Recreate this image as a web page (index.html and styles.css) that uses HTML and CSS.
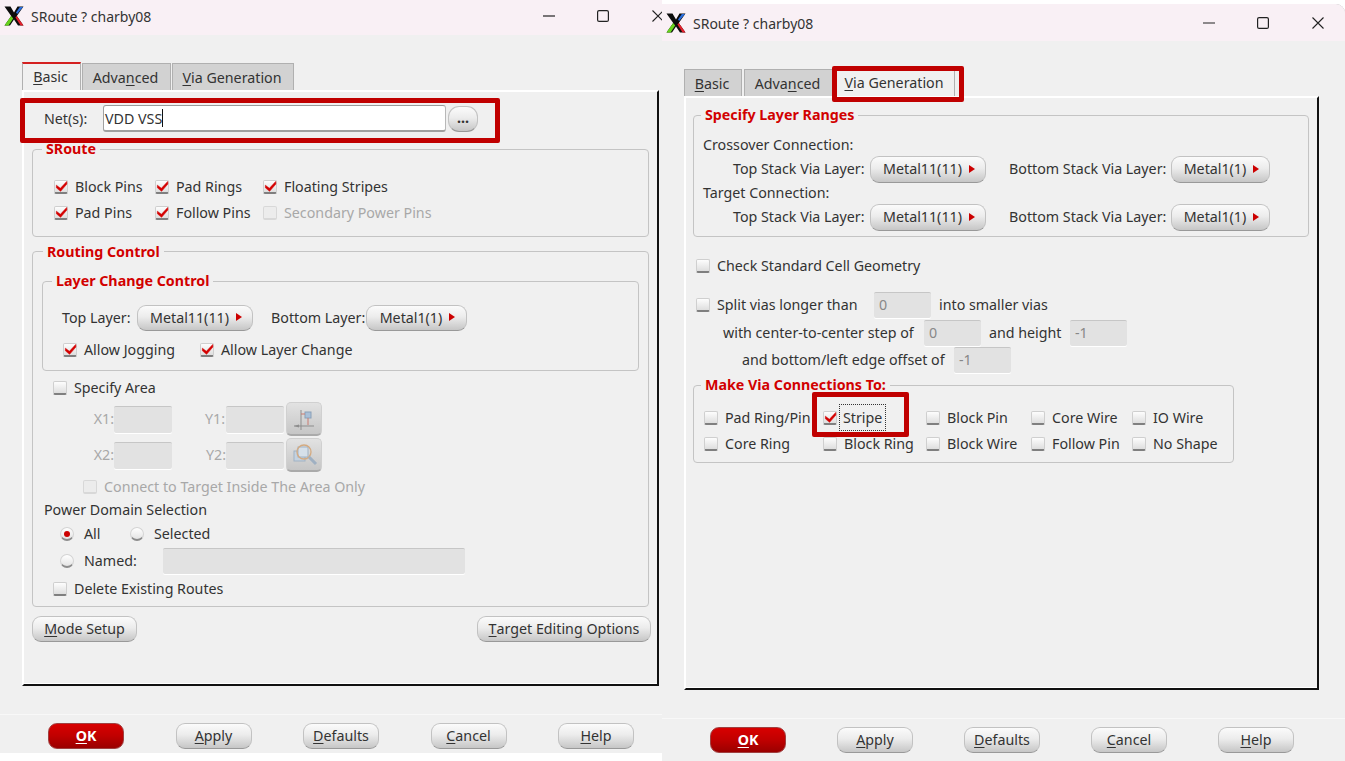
FILE: index.html
```html
<!DOCTYPE html>
<html lang="en">
<head>
<meta charset="utf-8">
<title>SRoute</title>
<link rel="stylesheet" href="styles.css">
</head>
<body>
<svg class="defs" width="0" height="0" aria-hidden="true">
  <symbol id="tick" viewBox="0 0 14 14"><path d="M1.5 5.6 L5.8 9 L12.6 1.6 L12.8 4.4 L6 12.2 L1.5 8.4 Z" fill="#d40000" stroke="#d40000" stroke-width="0.6"/></symbol>
  <symbol id="xlogo" viewBox="0 0 20 20">
    <path d="M0.5 0.5 H6.5 L10 6.5 L13.5 0.5 L19.5 0.5 L12.8 10 L19.5 19.5 H14 L10 13.5 L6 19.5 H0.5 L7.2 10 Z" fill="#0c0c0c"/>
    <path d="M0.5 19.5 L7.2 10 L9.2 12.4 L4.6 19.5 Z" fill="#66d31c"/>
    <path d="M19.5 19.5 L12.8 10 L11.4 11.6 L16.6 19.5 Z" fill="#e4202c"/>
    <path d="M19 1 L15.8 1 L12 6.6 L13.2 8 Z" fill="#2a6fe0"/>
  </symbol>
  <symbol id="min" viewBox="0 0 12 12"><path d="M0 6 H12" stroke="#222" stroke-width="1.2"/></symbol>
  <symbol id="max" viewBox="0 0 12 12"><rect x="0.6" y="0.6" width="10.8" height="10.8" rx="1.5" fill="none" stroke="#222" stroke-width="1.2"/></symbol>
  <symbol id="close" viewBox="0 0 12 12"><path d="M0.5 0.5 L11.5 11.5 M11.5 0.5 L0.5 11.5" stroke="#222" stroke-width="1.1"/></symbol>
</svg>

<section class="window win-left">
  <header class="titlebar title-left">
    <svg class="logo"><use href="#xlogo"/></svg>
    <span class="title-text">SRoute ? charby08</span>
    <div class="controls">
      <span class="ctl"><svg class="ctl-icon"><use href="#min"/></svg></span>
      <span class="ctl"><svg class="ctl-icon"><use href="#max"/></svg></span>
      <span class="ctl"><svg class="ctl-icon"><use href="#close"/></svg></span>
    </div>
  </header>
  <nav class="tabs">
    <span class="tab tab-active w-basic-l"><u>B</u>asic</span>
    <span class="tab w-adv-l">Adva<u>n</u>ced</span>
    <span class="tab w-via-l"><u>V</u>ia Generation</span>
  </nav>
  <main class="pane pane-left">
    <div class="row net-row">
      <span class="net-label">Net(s):</span>
      <span class="input net-input">VDD VSS<i class="caret"></i></span>
      <span class="btn dots">...</span>
    </div>
    <div class="group g-sroute">
      <span class="legend lg-sroute">SRoute</span>
      <div class="cb-grid sroute-grid">
        <label class="cb-item"><span class="cb"><svg class="tick"><use href="#tick"/></svg></span>Block Pins</label>
        <label class="cb-item"><span class="cb"><svg class="tick"><use href="#tick"/></svg></span>Pad Rings</label>
        <label class="cb-item"><span class="cb"><svg class="tick"><use href="#tick"/></svg></span>Floating Stripes</label>
        <label class="cb-item"><span class="cb"><svg class="tick"><use href="#tick"/></svg></span>Pad Pins</label>
        <label class="cb-item"><span class="cb"><svg class="tick"><use href="#tick"/></svg></span>Follow Pins</label>
        <label class="cb-item off"><span class="cb"></span>Secondary Power Pins</label>
      </div>
    </div>
    <div class="group g-routing">
      <span class="legend lg-routing">Routing Control</span>
      <div class="group g-layer">
        <span class="legend lg-layer">Layer Change Control</span>
        <div class="row layer-row">
          <span class="lbl-top text-up">Top Layer:</span>
          <span class="btn menu w-m11">Metal11(11)<i class="arrow"></i></span>
          <span class="lbl-bottom text-up">Bottom Layer:</span>
          <span class="btn menu w-m1-l">Metal1(1)<i class="arrow"></i></span>
        </div>
        <div class="row allow-row">
          <label class="cb-item allow-a"><span class="cb"><svg class="tick"><use href="#tick"/></svg></span>Allow Jogging</label>
          <label class="cb-item"><span class="cb"><svg class="tick"><use href="#tick"/></svg></span>Allow Layer Change</label>
        </div>
      </div>
      <div class="row specify-row">
        <label class="cb-item"><span class="cb"></span>Specify Area</label>
      </div>
      <div class="row coord-row">
        <span class="coord-l text-up">X1:</span><span class="input coord-in off-input"></span>
        <span class="coord-l coord-y coord-y1 text-up">Y1:</span><span class="input coord-in off-input"></span>
        <span class="icon-btn">
          <svg class="tool" viewBox="0 0 28 28"><path d="M4 21 H24 M11 5 V25" stroke="#8d8d8d" fill="none"/><path d="M4 21 L9 19.5 V22.5 Z" fill="#8d8d8d"/><rect x="15" y="7" width="6" height="6" fill="#a9c0d8" stroke="#8aa0b8"/><path d="M11 9 H15 M18 13 V20" stroke="#c87a70"/></svg>
        </span>
      </div>
      <div class="row coord-row coord-2">
        <span class="coord-l text-up">X2:</span><span class="input coord-in off-input"></span>
        <span class="coord-l coord-y text-up">Y2:</span><span class="input coord-in off-input"></span>
        <span class="icon-btn">
          <svg class="tool" viewBox="0 0 28 28"><rect x="4" y="10" width="11" height="10" fill="#c4d2e0" stroke="#a0b2c4"/><rect x="8" y="6" width="10" height="10" fill="#d6e0ea" stroke="#a0b2c4"/><circle cx="14" cy="11" r="7" fill="none" stroke="#d4aa80" stroke-width="1.3"/><path d="M19 16 L26 23" stroke="#9fb0c2" stroke-width="3"/></svg>
        </span>
      </div>
      <div class="row connect-row">
        <label class="cb-item off"><span class="cb"></span>Connect to Target Inside The Area Only</label>
      </div>
      <div class="row domain-row text-up">Power Domain Selection</div>
      <div class="row radio-row">
        <label class="rb-item rb-all"><span class="rb rb-on"></span>All</label>
        <label class="rb-item"><span class="rb"></span>Selected</label>
      </div>
      <div class="row radio-row">
        <label class="rb-item rb-named"><span class="rb"></span>Named:</label>
        <span class="input off-input named-in"></span>
      </div>
      <div class="row delete-row">
        <label class="cb-item"><span class="cb"></span>Delete Existing Routes</label>
      </div>
    </div>
    <div class="row mode-row">
      <span class="btn w-mode"><u>M</u>ode Setup</span>
      <span class="btn w-target"><u>T</u>arget Editing Options</span>
    </div>
  </main>
  <footer class="footer foot-left">
    <span class="btn btn-ok"><u>O</u>K</span>
    <span class="btn"><u>A</u>pply</span>
    <span class="btn"><u>D</u>efaults</span>
    <span class="btn"><u>C</u>ancel</span>
    <span class="btn"><u>H</u>elp</span>
  </footer>
  <div class="mark mark-net"></div>
</section>

<section class="window win-right">
  <header class="titlebar title-right">
    <svg class="logo"><use href="#xlogo"/></svg>
    <span class="title-text">SRoute ? charby08</span>
    <div class="controls">
      <span class="ctl"><svg class="ctl-icon"><use href="#min"/></svg></span>
      <span class="ctl"><svg class="ctl-icon"><use href="#max"/></svg></span>
      <span class="ctl"><svg class="ctl-icon"><use href="#close"/></svg></span>
    </div>
  </header>
  <nav class="tabs">
    <span class="tab w-basic-r"><u>B</u>asic</span>
    <span class="tab w-adv-r">Adva<u>n</u>ced</span>
    <span class="tab tab-plain w-via-r"><u>V</u>ia Generation</span>
  </nav>
  <main class="pane pane-right">
    <div class="group g-ranges">
      <span class="legend lg-ranges">Specify Layer Ranges</span>
      <div class="row conn-title text-up">Crossover Connection:</div>
      <div class="row stack-row">
        <span class="stack-top text-up">Top Stack Via Layer:</span>
        <span class="btn menu w-m11">Metal11(11)<i class="arrow"></i></span>
        <span class="stack-bottom text-up">Bottom Stack Via Layer:</span>
        <span class="btn menu w-m1-r">Metal1(1)<i class="arrow"></i></span>
      </div>
      <div class="row conn-title text-up">Target Connection:</div>
      <div class="row stack-row stack-2">
        <span class="stack-top text-up">Top Stack Via Layer:</span>
        <span class="btn menu w-m11">Metal11(11)<i class="arrow"></i></span>
        <span class="stack-bottom text-up">Bottom Stack Via Layer:</span>
        <span class="btn menu w-m1-r">Metal1(1)<i class="arrow"></i></span>
      </div>
    </div>
    <div class="row check-std">
      <label class="cb-item"><span class="cb"></span>Check Standard Cell Geometry</label>
    </div>
    <div class="row split-1">
      <span class="cb split-cb"></span><span class="split-l1 text-up">Split vias longer than</span>
      <span class="input off-input via-in">0</span><span class="after text-up">into smaller vias</span>
    </div>
    <div class="row split-2">
      <span class="split-l2 text-up">with center-to-center step of</span>
      <span class="input off-input via-in">0</span><span class="after after-h text-up">and height</span>
      <span class="input off-input via-in">-1</span>
    </div>
    <div class="row split-3">
      <span class="split-l3 text-up">and bottom/left edge offset of</span>
      <span class="input off-input via-in">-1</span>
    </div>
    <div class="group g-make">
      <span class="legend lg-make">Make Via Connections To:</span>
      <div class="cb-grid make-grid">
        <label class="cb-item"><span class="cb"></span>Pad Ring/Pin</label>
        <label class="cb-item"><span class="cb"><svg class="tick"><use href="#tick"/></svg></span><span class="focus">Stripe</span></label>
        <label class="cb-item"><span class="cb"></span>Block Pin</label>
        <label class="cb-item"><span class="cb"></span>Core Wire</label>
        <label class="cb-item"><span class="cb"></span>IO Wire</label>
        <label class="cb-item"><span class="cb"></span>Core Ring</label>
        <label class="cb-item"><span class="cb"></span>Block Ring</label>
        <label class="cb-item"><span class="cb"></span>Block Wire</label>
        <label class="cb-item"><span class="cb"></span>Follow Pin</label>
        <label class="cb-item"><span class="cb"></span>No Shape</label>
      </div>
    </div>
  </main>
  <footer class="footer foot-right">
    <span class="btn btn-ok"><u>O</u>K</span>
    <span class="btn"><u>A</u>pply</span>
    <span class="btn"><u>D</u>efaults</span>
    <span class="btn"><u>C</u>ancel</span>
    <span class="btn"><u>H</u>elp</span>
  </footer>
  <div class="mark mark-tab"></div>
  <div class="mark mark-stripe"></div>
</section>
</body>
</html>
```
FILE: styles.css
```css
* { box-sizing: border-box; }
html, body { margin: 0; padding: 0; }
body {
  width: 1345px; height: 761px; overflow: hidden; position: relative;
  background: #fff;
  font-family: "Noto Sans", "Open Sans", sans-serif;
  font-size: 14.25px; line-height: 19px; color: #333;
}
.defs { position: absolute; }
u { text-underline-offset: 2px; text-decoration-thickness: 1px; }
.text-up { padding-bottom: 2px; }

.window { position: absolute; background: #f0f0f0; display: flex; flex-direction: column; overflow: hidden; }
.win-left { left: 0; top: 0; width: 662px; height: 753px; }
.win-right { left: 662px; top: 4px; width: 683px; height: 757px; border-top-right-radius: 9px; box-shadow: inset 0 1px 0 #b4b4b4; }

.titlebar { flex: none; display: flex; align-items: center; background: #f9f0f5; padding-left: 4px; }
.title-left { width: 685px; height: 35px; }
.title-right { height: 37px; padding-top: 1px; }
.logo { width: 20px; height: 20px; flex: none; margin-top: -3px; }
.title-right .logo { margin-top: 0; }
.title-text { margin-left: 7px; font-size: 14px; color: #333; margin-top: -2px; }
.title-right .title-text { margin-top: 0; }
.controls { margin-left: auto; display: flex; }
.ctl { width: 54.5px; display: flex; justify-content: center; margin-top: -3px; }
.title-right .ctl { margin-top: 0; }
.ctl-icon { width: 12px; height: 12px; }

.tabs { flex: none; display: flex; margin: 27px 0 0 22px; height: 28px; align-items: flex-end; }
.tab {
  height: 27px; display: flex; align-items: center; justify-content: center;
  background: #d2d2d2; border: 1px solid #b0b0b0; border-bottom: 0; padding: 1px 2px 0 0;
  margin-right: 1px;
}
.tab-active { height: 28px; background: #f0f0f0; border-top: 2px solid #d42020; padding: 0 2px 2px 0; }
.tab-plain { height: 28px; background: #f0f0f0; margin-right: 0; padding: 0; }
.w-basic-l { width: 59px; }
.w-adv-l { width: 89px; }
.w-via-l { width: 122px; }
.w-basic-r { width: 58px; margin-right: 2px; }
.w-adv-r { width: 89px; margin-right: 0; }
.w-via-r { width: 122px; }

.pane {
  flex: none; display: flex; flex-direction: column;
  margin-left: 22px;
  border-style: solid; border-width: 2px;
  border-color: #fff #111 #111 #fff;
  box-shadow: inset 0 -1px 0 #fff;
}
.pane-left { width: 637px; height: 596px; padding: 0 8px; }
.pane-right { width: 635px; height: 594px; padding: 0 8px 0 7px; }

.row { display: flex; align-items: center; flex: none; white-space: nowrap; }
.group { position: relative; flex: none; border: 1px solid #c4c4c4; border-radius: 4px; }
.legend {
  position: absolute; top: -11px; background: #f0f0f0; padding: 0 4px;
  color: #d20000; font-weight: 700; font-size: 14.25px; white-space: nowrap;
}

.input { display: flex; align-items: center; flex: none; border: 1px solid #b8b8b8; border-top-color: #999; border-radius: 2px; background: #fff; }
.off-input { background: #e2e2e2; color: #888; border: 0; border-top: 1px solid #c6c6c6; padding: 0 0 2px 5px; box-shadow: 0 1px 0 #fff; }

.btn {
  flex: none; display: flex; align-items: center; justify-content: center;
  height: 26px; border-radius: 9px; border: 1px solid #c2c2c2; border-bottom-color: #999;
  background: linear-gradient(#fbfbfb, #ececec 45%, #c6c6c6);
  color: #333; white-space: nowrap; padding-bottom: 2px;
}
.menu { height: 27px; padding-left: 2px; }
.arrow { width: 0; height: 0; margin-left: 7px; border-left: 6px solid #cc0000; border-top: 4.5px solid transparent; border-bottom: 4.5px solid transparent; }

.cb-item { display: flex; align-items: center; white-space: nowrap; padding-bottom: 2px; }
.cb {
  flex: none; width: 14px; height: 14px; margin-right: 7px; margin-top: 2px; position: relative; display: block;
  border: 1px solid #cfcfcf; border-bottom: 2px solid #7f7f7f; border-radius: 2px;
  background: linear-gradient(#fdfdfd, #dedede);
}
.split-cb { margin-top: 0; }
.tick { position: absolute; left: 0; top: -1px; width: 13px; height: 13px; }
.off { color: #a8a8a8; }
.off .cb { border-color: #d8d8d8; background: #ececec; }

.rb-item { display: flex; align-items: center; white-space: nowrap; padding-bottom: 2px; }
.rb {
  flex: none; width: 14px; height: 14px; border-radius: 50%; margin-right: 10px; margin-top: 2px;
  border: 1px solid #d4d4d4; border-bottom: 2px solid #8c8c8c;
  background: linear-gradient(#fff, #e4e4e4);
  display: flex; align-items: center; justify-content: center;
}
.rb-on::after { content: ""; width: 6px; height: 6px; border-radius: 50%; background: #cc0000; }

/* left window */
.net-row { margin-top: 13px; height: 27px; padding-left: 12px; }
.net-label { width: 59px; }
.net-input { width: 343px; height: 27px; padding-left: 1px; border-left: 1.5px solid #a0a0a0; border-bottom: 2px solid #a0a0a0; border-radius: 3px; color: #333; }
.caret { width: 1px; height: 18px; background: #111; }
.dots { width: 30px; margin-left: 2px; border-radius: 11px; font-weight: 700; padding-bottom: 3px; }

.g-sroute { margin-top: 17px; height: 88px; padding-top: 24px; }
.lg-sroute { left: 9px; }
.cb-grid { display: grid; grid-auto-rows: 26px; align-items: center; }
.sroute-grid { grid-template-columns: 101px 108px auto; padding-left: 21px; }

.g-routing { margin-top: 14px; height: 356px; }
.lg-routing { left: 10px; top: -10px; }
.g-layer { margin: 29px 9px 0; height: 90px; padding-top: 23px; }
.lg-layer { left: 9px; }
.layer-row { height: 26px; padding-left: 19px; }
.lbl-top { width: 75px; }
.lbl-bottom { margin-left: 18px; width: 95px; }
.w-m11 { width: 116px; }
.w-m1-l { width: 101px; }
.layer-row .btn { height: 26px; }
.allow-row { height: 26px; margin-top: 6px; padding-left: 20px; }
.allow-a { width: 137px; }
.specify-row { height: 26px; margin-top: 4px; padding-left: 20px; }
.coord-row { height: 34px; margin-top: 1px; padding-left: 60px; }
.coord-2 { margin-top: 2px; }
.coord-l { width: 21px; color: #a8a8a8; text-align: right; }
.coord-y { margin-left: 33px; }
.coord-y1 { padding-right: 2px; }
.coord-in { width: 58px; height: 27px; }
.icon-btn {
  width: 36px; height: 34px; margin-left: 2px; border-radius: 5px; flex: none;
  display: flex; align-items: center; justify-content: center;
  background: linear-gradient(#e2e2e2, #c6c6c6); border: 1px solid #d0d0d0; border-bottom: 2px solid #aaa;
}
.tool { width: 28px; height: 28px; }
.connect-row { height: 26px; margin-top: 2px; padding-left: 50px; }
.domain-row { height: 20px; padding-left: 11px; }
.radio-row { height: 26px; margin-top: 1px; padding-left: 27px; }
.rb-all { width: 70px; }
.rb-named { width: 103px; }
.named-in { width: 302px; height: 26px; }
.delete-row { height: 26px; margin-top: 2px; padding-left: 20px; }
.mode-row { margin-top: 9px; margin-right: -2px; justify-content: space-between; }
.w-mode { width: 105px; }
.w-target { width: 174px; }

.footer { display: flex; margin-top: 28px; padding: 8px 0 0 48px; border-top: 1px solid #f8f8f8; flex: 1; }
.foot-left { gap: 51.5px; }
.foot-right { gap: 51px; }
.footer .btn { width: 76px; }
.btn-ok {
  background: linear-gradient(#d80000, #c00000 50%, #9a0000); border-color: #a04040;
  color: #fff; font-weight: 700;
}

/* right window */
.g-ranges { margin-top: 17px; height: 122px; padding: 19px 0 0 9px; }
.lg-ranges { left: 7px; }
.conn-title { height: 20px; }
.stack-row { height: 27px; margin-top: 1px; padding-left: 30px; }
.stack-2 { margin-top: 1px; }
.stack-top { width: 137px; }
.stack-bottom { width: 162px; margin-left: 23px; }
.w-m1-r { width: 99px; }
.check-std { height: 26px; margin-top: 16px; padding-left: 3px; }
.split-1 { height: 26px; margin-top: 13px; padding-left: 3px; }
.split-l1 { width: 157px; }
.via-in { width: 57px; height: 26px; }
.after { margin-left: 8px; }
.after-h { width: 81px; }
.split-2 { height: 26px; margin-top: 2px; padding-left: 30px; }
.split-l2 { width: 201px; }
.split-3 { height: 26px; margin-top: 1px; padding-left: 49px; }
.split-l3 { width: 212px; }
.g-make { margin: 12px 0 0 0; width: 541px; height: 78px; padding: 19px 0 0 10px; }
.lg-make { left: 7px; }
.make-grid { grid-template-columns: 119px 103px 105px 101px 90px; }
.focus { outline: 1px dotted #333; outline-offset: 3px; margin-left: -1px; }

/* red annotation boxes drawn over the dialogs */
.mark { position: absolute; border: 5px solid #c00000; border-radius: 2px; }
.mark-net { left: 20px; top: 98px; width: 480px; height: 45px; }
.mark-tab { left: 170px; top: 62px; width: 132px; height: 36px; }
.mark-stripe { left: 150px; top: 388px; width: 97px; height: 45px; }
```
